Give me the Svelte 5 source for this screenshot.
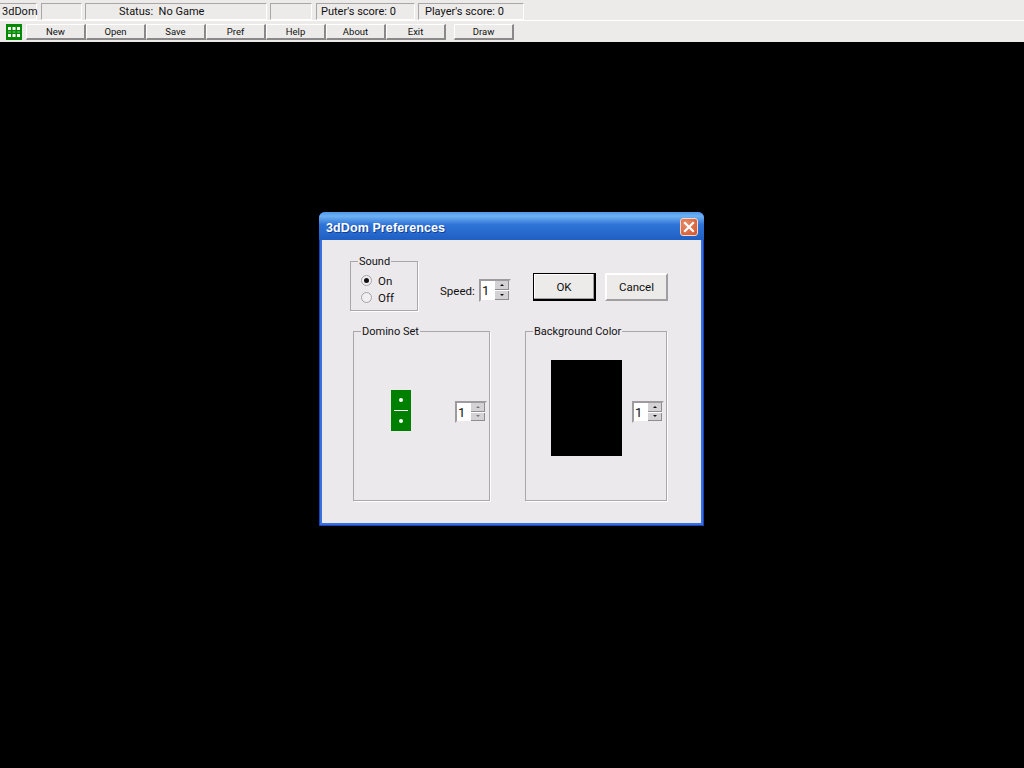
<script>
  const panels = [
    { text: '3dDom', w: 37, gap: 4, left: true },
    { text: '', w: 41, gap: 3 },
    { text: 'Status:  No Game', w: 182, gap: 3, pad: 33 },
    { text: '', w: 42, gap: 4 },
    { text: "Puter's score: 0", w: 99, gap: 3, pad: 4 },
    { text: "Player's score: 0", w: 106, gap: 0, pad: 6 }
  ];
  const buttons = ['New', 'Open', 'Save', 'Pref', 'Help', 'About', 'Exit'];
</script>

<div class="screen">
  <header class="bar">
    <div class="status">
      {#each panels as p}
        <div class="panel" class:left={p.left} style="width:{p.w}px;margin-right:{p.gap}px;padding-left:{p.pad ?? 2}px">{p.text}</div>
      {/each}
    </div>
    <div class="tools">
      <svg class="logo" width="16" height="16" viewBox="0 0 16 16">
        <rect width="16" height="16" fill="#008a00" />
        <g fill="#fff">
          <rect x="2" y="3" width="3" height="3" /><rect x="6.5" y="3" width="3" height="3" /><rect x="11" y="3" width="3" height="3" />
          <rect x="2" y="7.5" width="3" height="1" fill="#8cc48c" /><rect x="6.5" y="7.5" width="3" height="1" fill="#8cc48c" /><rect x="11" y="7.5" width="3" height="1" fill="#8cc48c" />
          <rect x="2" y="10" width="3" height="3" /><rect x="6.5" y="10" width="3" height="3" /><rect x="11" y="10" width="3" height="3" />
        </g>
      </svg>
      <div class="btns">
        {#each buttons as b}<button class="tool">{b}</button>{/each}
      </div>
      <button class="tool draw">Draw</button>
    </div>
  </header>

  <main class="desk">
    <section class="dialog">
      <div class="title">
        <span>3dDom Preferences</span>
        <div class="close">
          <svg width="12" height="12" viewBox="0 0 12 12"><path d="M2 2 10 10M10 2 2 10" stroke="#fff" stroke-width="2.2" stroke-linecap="square" /></svg>
        </div>
      </div>
      <div class="body">
        <div class="top">
          <div class="group sound">
            <span class="legend">Sound</span>
            <div class="radio"><span class="dot on"></span>On</div>
            <div class="radio"><span class="dot"></span>Off</div>
          </div>
          <div class="speed">
            <span class="speedlabel">Speed:</span>
            <div class="spin">
              <span class="val">1</span>
              <div class="arrows"><i class="up"></i><i class="down"></i></div>
            </div>
          </div>
          <button class="push default">OK</button>
          <button class="push">Cancel</button>
        </div>
        <div class="lower">
          <div class="group domino">
            <span class="legend">Domino Set</span>
            <div class="tile"><b></b><em></em><b></b></div>
            <div class="spin light">
              <span class="val">1</span>
              <div class="arrows"><i class="up"></i><i class="down"></i></div>
            </div>
          </div>
          <div class="group bgc">
            <span class="legend">Background Color</span>
            <div class="swatch"></div>
            <div class="spin">
              <span class="val">1</span>
              <div class="arrows"><i class="up"></i><i class="down"></i></div>
            </div>
          </div>
        </div>
      </div>
    </section>
  </main>
</div>

<style>
  :global(body) { margin: 0; background: #000; }
  .screen {
    width: 1024px; height: 768px; background: #000; overflow: hidden;
    font-family: Roboto, "Liberation Sans", sans-serif; font-size: 11px; color: #111;
    display: flex; flex-direction: column;
  }
  .bar { background: #ecebe9; height: 42px; flex: none; }
  .status { display: flex; height: 21px; box-sizing: border-box; padding-top: 3px; border-bottom: 1px solid #fff; }
  .panel {
    height: 17px; box-sizing: border-box; flex: none; text-align: left; line-height: 16px;
    border-top: 1px solid #a8a6a6; border-left: 1px solid #a8a6a6; border-bottom: 1px solid #fff; border-right: 1px solid #fff;
    white-space: pre;
  }
  .panel.left { border-left: 0; }
  .tools { display: flex; align-items: center; height: 21px; padding-left: 6px; }
  .logo { margin-right: 4px; flex: none; }
  .btns { display: flex; gap: 0; margin-right: 8px; }
  button {
    font: inherit; color: inherit; padding: 0; margin: 0; background: #ecebe9; box-sizing: border-box;
  }
  .tool {
    width: 60px; height: 16px; line-height: 13px; font-size: 9.5px;
    border: 1px solid; border-color: #fff #8a8888 #8a8888 #fff; border-width: 1px 2px 2px 1px;
  }
  .desk { flex: 1; padding: 170px 0 0 319px; }
  .dialog {
    width: 385px; height: 314px; box-sizing: border-box; display: flex; flex-direction: column;
    background: #3a6fe0; border-radius: 6px 6px 0 0; padding: 0 3px 3px;
    box-shadow: inset 1px 0 0 #1a45b4, inset -1px 0 0 #1a45b4, inset 0 -1px 0 #1a45b4;
  }
  .title {
    height: 28px; flex: none; margin: 0 -3px; padding: 3px 6px 0 7px; box-sizing: border-box; border-radius: 6px 6px 0 0;
    background: linear-gradient(#4f97ea 0%, #6db1f2 15%, #2f74d8 45%, #1f5fc4 100%);
    display: flex; align-items: center; justify-content: space-between;
    color: #fff; font-family: "Liberation Sans", sans-serif; font-weight: bold; font-size: 12.5px; letter-spacing: .1px; text-shadow: 1px 1px 0 #123f96;
  }
  .close {
    width: 18px; height: 18px; margin-top: -2px; box-sizing: border-box; border: 1px solid #f3d6cc; border-radius: 3px;
    background: radial-gradient(circle at 30% 30%, #e98a68, #d1542c);
    display: flex; align-items: center; justify-content: center;
  }
  .body { flex: 1; background: #ece9ed; padding: 21px 0 0 28px; }
  .top { display: flex; align-items: flex-start; height: 70px; }
  .group { position: relative; border: 1px solid #a9a7a9; box-sizing: border-box; box-shadow: 1px 1px 0 #fff; }
  .legend { position: absolute; top: -7px; left: 7px; padding: 0 1px; background: #ece9ed; line-height: 13px; font-size: 11px; }
  .sound { width: 68px; height: 50px; padding: 10px 0 0 10px; }
  .radio { display: flex; align-items: center; height: 17px; font-size: 11.5px; }
  .dot {
    width: 11px; height: 11px; border: 1px solid #a5a3a5; border-radius: 50%; margin-right: 6px; background: #f1eff1;
    box-sizing: border-box; position: relative;
  }
  .dot.on::after { content: ""; position: absolute; left: 2px; top: 2px; width: 5px; height: 5px; border-radius: 50%; background: #111; }
  .speed { display: flex; align-items: center; width: 71px; margin: 18px 22px 0 22px; font-size: 11.5px; }
  .speedlabel { width: 39px; flex: none; }
  .spin {
    display: flex; width: 32px; height: 23px; box-sizing: border-box; background: #fff; flex: none;
    border: 2px solid; border-color: #9d9b9d #ece9ed #ece9ed #9d9b9d; font-size: 13px;
  }
  .val { width: 12px; line-height: 19px; padding-left: 1px; box-sizing: content-box; }
  .arrows { flex: 1; display: flex; flex-direction: column; gap: 1px; background: #fff; margin-left: 1px; }
  .arrows i {
    flex: 1; background: #d4d2d4; position: relative; border-right: 1px solid #8f8d8f; border-bottom: 1px solid #8f8d8f;
  }
  .arrows i::after {
    content: ""; position: absolute; left: 50%; top: 50%; margin: -1px 0 0 -2px;
    border-left: 2px solid transparent; border-right: 2px solid transparent;
  }
  .arrows .up::after { border-bottom: 2px solid #111; }
  .arrows .down::after { border-top: 2px solid #111; }
  .light .arrows i::after { opacity: .45; }
  .push {
    width: 63px; height: 28px; margin: 12px 9px 0 0; font-size: 11.5px;
    border: 2px solid; border-color: #fff #a09ea0 #a09ea0 #fff;
  }
  .push.default { border: 1px solid #000; border-right-width: 2px; border-bottom-width: 2px; box-shadow: inset -1px -1px 0 #a09ea0, inset 1px 1px 0 #fff; }
  .lower { display: flex; margin-left: 3px; }
  .domino { width: 137px; height: 170px; margin-right: 35px; }
  .bgc { width: 142px; height: 170px; }
  .tile {
    position: absolute; left: 37px; top: 58px; width: 20px; height: 41px; background: #008000;
    display: flex; flex-direction: column; align-items: center; justify-content: space-between; padding: 8px 0; box-sizing: border-box;
  }
  .tile b { width: 4px; height: 4px; border-radius: 50%; background: #fff; }
  .tile em { width: 14px; height: 1px; background: #fff; }
  .domino .spin { position: absolute; left: 101px; top: 69px; height: 22px; }
  .bgc .spin { position: absolute; left: 106px; top: 69px; height: 22px; }
  .swatch { position: absolute; left: 25px; top: 28px; width: 71px; height: 96px; background: #000; }
</style>
